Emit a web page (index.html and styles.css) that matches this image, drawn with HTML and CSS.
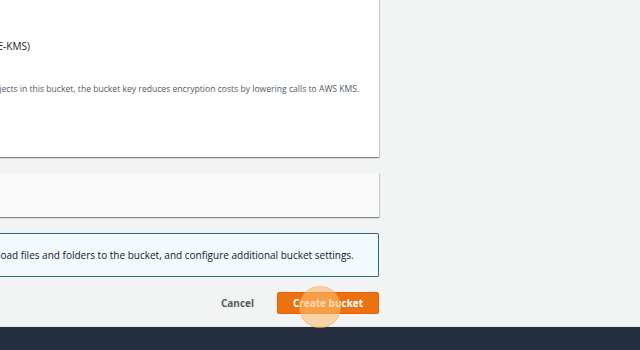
FILE: index.html
```html
<!DOCTYPE html>
<html lang="en">
<head>
  <meta charset="UTF-8">
  <meta name="viewport" content="width=device-width, initial-scale=1.0">
  <title>Create bucket</title>
  <link rel="stylesheet" href="styles.css">
</head>
<body>
  <div class="page">
    <div class="content">
      <div class="card encryption">
        <div class="option">
          <span class="radio"></span>
          <span class="option-label">AWS Key Management Service key (SSE-KMS)</span>
        </div>
        <p class="option-desc">When KMS encryption is used to encrypt new objects in this bucket, the bucket key reduces encryption costs by lowering calls to AWS KMS.</p>
      </div>

      <div class="card advanced"></div>

      <div class="info-box">
        <p>After creating the bucket you can upload files and folders to the bucket, and configure additional bucket settings.</p>
      </div>

      <div class="actions">
        <button class="btn-cancel">Cancel</button>
        <button class="btn-primary">Create bucket</button>
        <span class="click-dot"></span>
      </div>
    </div>
  </div>
  <footer class="footer"></footer>
</body>
</html>
```

FILE: styles.css
```css
body {
  margin: 0;
  height: 350px;
  background: #f2f3f3;
  font-family: "Open Sans", "Noto Sans", Arial, sans-serif;
  color: #16191f;
  display: flex;
  flex-direction: column;
  overflow: hidden;
}
.page {
  flex: 1;
}
.content {
  width: 700px;
  margin-left: -321px;
  position: relative;
}
.card {
  background: white;
  box-shadow: 0 1px 1px 0 rgba(0, 28, 36, 0.3), 1px 1px 1px 0 rgba(0, 28, 36, 0.15), -1px 1px 1px 0 rgba(0, 28, 36, 0.15);
}
.encryption {
  margin-top: -40px;
  height: 197px;
  box-sizing: border-box;
  padding: 78px 0 0 20px;
}
.option {
  display: flex;
  align-items: center;
  gap: 8px;
  margin-left: 103px;
}
.radio {
  width: 12px;
  height: 12px;
  border: 2px solid #0073bb;
  border-radius: 50%;
  box-sizing: border-box;
}
.option-label {
  font-size: 10px;
  line-height: 16px;
}
.option-desc {
  margin: 29px 0 0 107px;
  font-size: 8.6px;
  line-height: 12px;
  color: #545b64;
}
.advanced {
  margin-top: 16px;
  height: 44px;
  background: #fafafa;
}
.info-box {
  margin-top: 16px;
  height: 44px;
  box-sizing: border-box;
  background: #f1faff;
  border: 1px solid #2a6a8a;
  border-radius: 1px;
  padding: 0 0 0 149px;
  display: flex;
  align-items: center;
}
.info-box p {
  margin: 0;
  font-size: 10px;
  line-height: 16px;
}
.actions {
  margin-top: 15px;
  display: flex;
  justify-content: flex-end;
  align-items: center;
  gap: 23px;
}
.btn-cancel {
  background: none;
  border: none;
  padding: 0;
  font-family: inherit;
  font-size: 10px;
  font-weight: bold;
  color: #545b64;
}
.btn-primary {
  width: 102px;
  height: 22px;
  background: #ec7211;
  border: 1px solid #eb5f07;
  border-radius: 2px;
  font-family: inherit;
  font-size: 10px;
  font-weight: bold;
  color: white;
  padding: 0;
}
.click-dot {
  position: absolute;
  right: 38px;
  bottom: -14px;
  width: 40px;
  height: 40px;
  border-radius: 50%;
  background: rgba(253, 190, 110, 0.6);
  border: 1px solid rgba(236, 114, 17, 0.25);
}
.footer {
  height: 23px;
  background: #232f3e;
  border-top: 1px solid #e6e8e8;
}
```
